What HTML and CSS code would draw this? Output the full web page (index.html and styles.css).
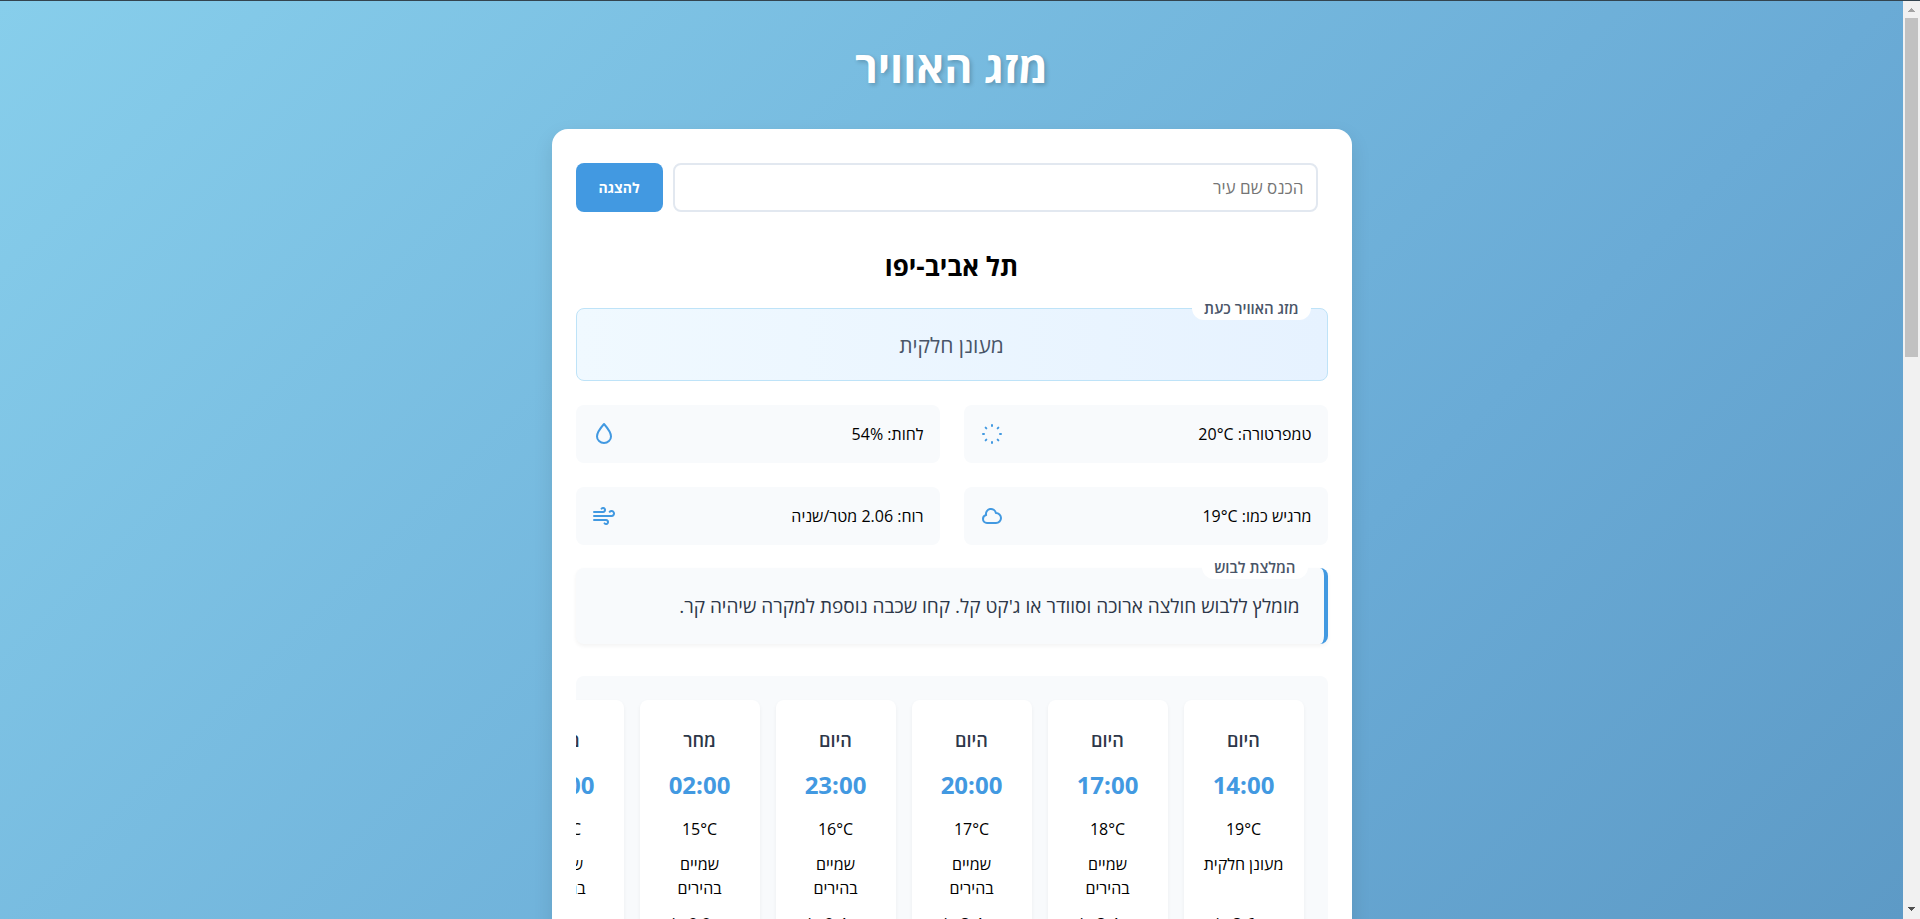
FILE: index.html
```html
<!DOCTYPE html>
<html lang="he" dir="rtl">
<head>
<meta charset="utf-8">
<title>מזג האוויר</title>
<link rel="stylesheet" href="styles.css">
</head>
<body>
<div class="window" dir="ltr">
  <div class="viewport" dir="rtl">
    <h1 class="title">מזג האוויר</h1>
    <main class="card">
      <form class="search">
        <input class="search-input" type="text" placeholder="הכנס שם עיר" aria-label="הכנס שם עיר">
        <button class="search-button" type="button">להצגה</button>
      </form>
      <h2 class="city">תל אביב-יפו</h2>
      <section class="current">
        <span class="tag">מזג האוויר כעת</span>
        <p class="current-text">מעונן חלקית</p>
      </section>
      <section class="details">
        <div class="detail"><span>טמפרטורה: 20°C</span>
          <svg class="icon" viewBox="0 0 24 24"><path d="M12 3v1m0 16v1m9-9h-1M4 12H3m15.364 6.364l-.707-.707M6.343 6.343l-.707-.707m12.728 0l-.707.707M6.343 17.657l-.707.707"/></svg>
        </div>
        <div class="detail"><span>לחות: 54%</span>
          <svg class="icon" viewBox="0 0 24 24"><path d="M12 2C8 6.500 5 10.500 5 14.500a7 6.500 0 0 0 14 0c0-4-3-8-7-12.500z"/></svg>
        </div>
        <div class="detail"><span>מרגיש כמו: 19°C</span>
          <svg class="icon" viewBox="0 0 24 24"><path d="M3 15a4 4 0 0 0 4 4h9a5 5 0 1 0-.1-9.999 5.002 5.002 0 1 0-9.780 2.096A4.001 4.001 0 0 0 3 15z"/></svg>
        </div>
        <div class="detail"><span>רוח: 2.06 מטר/שניה</span>
          <svg class="icon" viewBox="0 0 24 24"><path d="M9.590 4.590A2 2 0 1 1 11 8H2m10.590 11.410A2 2 0 1 0 14 16H2m15.730-8.270A2.500 2.500 0 1 1 19.500 12H2"/></svg>
        </div>
      </section>
      <section class="advice">
        <span class="tag">המלצת לבוש</span>
        <p class="advice-text">מומלץ ללבוש חולצה ארוכה וסוודר או ג'קט קל. קחו שכבה נוספת למקרה שיהיה קר.</p>
      </section>
      <section class="forecast">
        <article class="slot"><h3 class="day">היום</h3><p class="time">14:00</p><p class="line">19°C</p><p class="line sky">מעונן חלקית</p><p class="line wind">רוח: 3.6 מ/ש</p></article>
        <article class="slot"><h3 class="day">היום</h3><p class="time">17:00</p><p class="line">18°C</p><p class="line sky">שמיים בהירים</p><p class="line wind">רוח: 3.4 מ/ש</p></article>
        <article class="slot"><h3 class="day">היום</h3><p class="time">20:00</p><p class="line">17°C</p><p class="line sky">שמיים בהירים</p><p class="line wind">רוח: 3.4 מ/ש</p></article>
        <article class="slot"><h3 class="day">היום</h3><p class="time">23:00</p><p class="line">16°C</p><p class="line sky">שמיים בהירים</p><p class="line wind">רוח: 2.4 מ/ש</p></article>
        <article class="slot"><h3 class="day">מחר</h3><p class="time">02:00</p><p class="line">15°C</p><p class="line sky">שמיים בהירים</p><p class="line wind">רוח: 2.2 מ/ש</p></article>
        <article class="slot"><h3 class="day">מחר</h3><p class="time">05:00</p><p class="line">15°C</p><p class="line sky">שמיים בהירים</p><p class="line wind">רוח: 2.2 מ/ש</p></article>
      </section>
    </main>
  </div>
  <div class="scrollbar">
    <svg class="arrow" viewBox="0 0 17 17"><path fill="#a3a3a3" d="M8 7h1v1h1v1h1v1h1v1H5v-1h1V9h1V8h1z"/></svg>
    <div class="track"><div class="thumb"></div></div>
    <svg class="arrow" viewBox="0 0 17 17"><path fill="#505050" d="M5 5h7v1h-1v1h-1v1H9v1H8V8H7V7H6V6H5z"/></svg>
  </div>
</div>
</body>
</html>
```
FILE: styles.css
```css
* { box-sizing: border-box; }
body, h1, h2, h3, p { margin: 0; }
body {
  font-family: "Open Sans", "Noto Sans", sans-serif;
  font-size: 16px;
  color: #000;
}
.window {
  display: flex;
  height: 100vh;
  overflow: hidden;
  border-top: 1px solid #33444f;
}
.viewport {
  flex: 1;
  min-width: 0;
  overflow: hidden;
  padding: 34px 16px;
  background: linear-gradient(135deg, #87ceeb 0%, #6aabd6 67%, #5d9ac6 100%);
}
.title {
  color: #fff;
  font-size: 43px;
  line-height: 64px;
  text-align: center;
  text-shadow: 2px 2px 4px rgba(0, 0, 0, 0.2);
}
.card {
  max-width: 800px;
  margin: 30px auto 0;
  padding: 24px;
  background: #fff;
  border-radius: 16px;
  box-shadow: 0 8px 20px rgba(0, 0, 0, 0.1);
}
.search {
  display: flex;
  gap: 10px;
  padding-block: 10px;
  padding-inline-start: 10px;
}
.search-input {
  flex: 1;
  min-width: 0;
  height: 49px;
  padding: 0 12px;
  border: 2px solid #e2e8f0;
  border-radius: 8px;
  font: inherit;
  font-size: 17px;
  background: #fff;
}
.search-input::placeholder { color: #757575; }
.search-button {
  width: 87px;
  padding: 0;
  border: 0;
  border-radius: 8px;
  background: #4299e1;
  color: #fff;
  font: 700 14px "Open Sans", "Noto Sans", sans-serif;
}
.city {
  margin-top: 24px;
  font-size: 26px;
  line-height: 40px;
  text-align: center;
}
.current {
  position: relative;
  margin-top: 22px;
  padding: 20px 24px 18px;
  border: 1px solid #bee3f8;
  border-radius: 8px;
  background: linear-gradient(90deg, #f0f9ff, #e6f2ff);
}
.current-text {
  font-size: 21px;
  line-height: 33px;
  text-align: center;
  color: #4a5568;
}
.tag {
  position: absolute;
  top: -13px;
  right: 16px;
  padding: 0 12px;
  border-radius: 12px;
  background: #fff;
  color: #4a5568;
  font-size: 15px;
  font-weight: 600;
  line-height: 24px;
}
.details {
  display: grid;
  grid-template-columns: 1fr 1fr;
  gap: 24px;
  margin-top: 24px;
}
.detail {
  display: flex;
  align-items: center;
  justify-content: space-between;
  min-height: 58px;
  padding: 16px;
  border-radius: 8px;
  background: #f8fafc;
}
.icon {
  width: 24px;
  height: 24px;
  fill: none;
  stroke: #4299e1;
  stroke-width: 2;
  stroke-linecap: round;
  stroke-linejoin: round;
}
.advice {
  position: relative;
  margin-top: 23px;
  padding: 20px 24px;
  border-right: 4px solid #4299e1;
  border-radius: 8px;
  background: #f8fafc;
  box-shadow: 0 2px 4px rgba(0, 0, 0, 0.05);
}
.advice-text {
  font-size: 19px;
  line-height: 36px;
  color: #2d3748;
}
.forecast {
  display: flex;
  gap: 16px;
  margin-top: 32px;
  padding: 24px;
  overflow: hidden;
  border-radius: 8px;
  background: #f8fafc;
}
.slot {
  flex: 0 0 120px;
  min-width: 0;
  padding: 24px 16px;
  border-radius: 8px;
  background: #fff;
  box-shadow: 0 2px 4px rgba(0, 0, 0, 0.05);
  text-align: center;
}
.day {
  font-size: 18px;
  font-weight: 600;
  line-height: 32px;
  color: #2d3748;
}
.time {
  margin-top: 9px;
  font-size: 24px;
  font-weight: 700;
  line-height: 40px;
  color: #4299e1;
}
.line {
  margin-top: 12px;
  line-height: 24px;
}
.sky {
  min-height: 48px;
  margin-top: 11px;
  padding: 0 2px;
}
.wind { white-space: nowrap; }
.scrollbar {
  display: flex;
  flex-direction: column;
  width: 17px;
  background: #f1f1f1;
}
.arrow {
  display: block;
  width: 17px;
  height: 17px;
}
.track {
  flex: 1;
  padding: 0 2px;
}
.thumb {
  height: 38.4%;
  background: #c1c1c1;
}
```
